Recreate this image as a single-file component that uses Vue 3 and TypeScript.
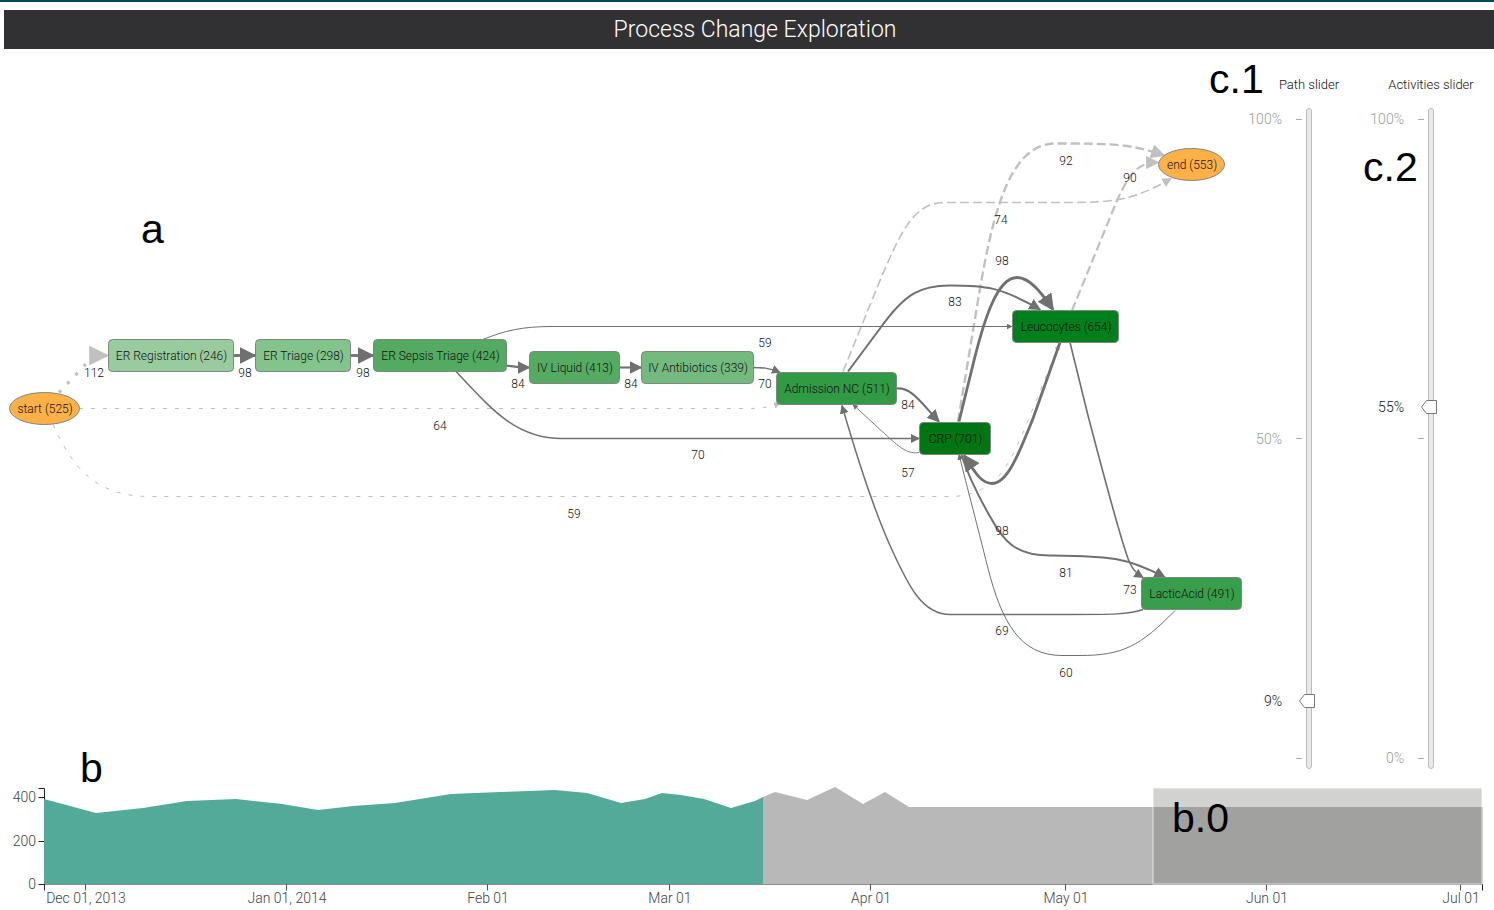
<script setup lang="ts">
import { computed, ref } from 'vue'

interface GraphNode {
  id: string
  label: string
  x: number
  y: number
  w: number
  fill: string
  kind: 'activity' | 'terminal'
}

interface GraphEdge {
  d: string
  weight: number
  width: number
  labelX: number
  labelY: number
  kind: 'flow' | 'terminal'
  dash?: string
}

interface Slider {
  id: string
  title: string
  value: number
  ticks: string[]
}

const nodes: GraphNode[] = [
  { id: 'start', label: 'start (525)', x: 9, y: 343, w: 70, fill: '#ffb046', kind: 'terminal' },
  { id: 'reg', label: 'ER Registration (246)', x: 108, y: 290, w: 125, fill: '#98cc9f', kind: 'activity' },
  { id: 'triage', label: 'ER Triage (298)', x: 255, y: 290, w: 95, fill: '#83c48d', kind: 'activity' },
  { id: 'sepsis', label: 'ER Sepsis Triage (424)', x: 373, y: 290, w: 133, fill: '#53aa60', kind: 'activity' },
  { id: 'liquid', label: 'IV Liquid (413)', x: 529, y: 302, w: 90, fill: '#55ab62', kind: 'activity' },
  { id: 'antibiotics', label: 'IV Antibiotics (339)', x: 641, y: 302, w: 112, fill: '#74ba7e', kind: 'activity' },
  { id: 'admission', label: 'Admission NC (511)', x: 776, y: 323, w: 120, fill: '#319a45', kind: 'activity' },
  { id: 'crp', label: 'CRP (701)', x: 919, y: 373, w: 71, fill: '#007514', kind: 'activity' },
  { id: 'leucocytes', label: 'Leucocytes (654)', x: 1012, y: 261, w: 106, fill: '#00801c', kind: 'activity' },
  { id: 'lactic', label: 'LacticAcid (491)', x: 1141, y: 528, w: 100, fill: '#389e4b', kind: 'activity' },
  { id: 'end', label: 'end (553)', x: 1158, y: 99, w: 66, fill: '#ffb046', kind: 'terminal' },
]

const edges: GraphEdge[] = [
  { d: 'M59 343 L80 321 C88 312 92 306 107 306', weight: 112, width: 3.3, labelX: 94, labelY: 324, kind: 'terminal', dash: '3 9' },
  { d: 'M79 359 H745 C760 359 768 358 780 354', weight: 64, width: 1.1, labelX: 440, labelY: 377, kind: 'terminal', dash: '4 8' },
  { d: 'M53 375 C70 411 90 447 150 447 H950 C1000 447 1012 406 1024 381 L1059 295', weight: 59, width: 1, labelX: 574, labelY: 465, kind: 'terminal', dash: '4 8' },
  { d: 'M843 322 L882 226 C900 186 912 153 945 153 H1070 C1115 153 1135 150 1171 129', weight: 74, width: 1.6, labelX: 1001, labelY: 171, kind: 'terminal', dash: '9 4' },
  { d: 'M958 372 L978 251 C990 181 1005 94 1055 94 C1110 94 1130 94 1164 106', weight: 92, width: 2.4, labelX: 1066, labelY: 112, kind: 'terminal', dash: '9 4' },
  { d: 'M1072 261 L1117 151 C1130 123 1138 113 1158 113', weight: 90, width: 2.2, labelX: 1130, labelY: 129, kind: 'terminal', dash: '9 4' },
  { d: 'M233 306 H255', weight: 98, width: 2.8, labelX: 245, labelY: 324, kind: 'flow' },
  { d: 'M350 306 H373', weight: 98, width: 2.8, labelX: 363, labelY: 324, kind: 'flow' },
  { d: 'M506 316 C513 317 518 318 529 318', weight: 84, width: 2.1, labelX: 518, labelY: 335, kind: 'flow' },
  { d: 'M619 318 H641', weight: 84, width: 2.1, labelX: 631, labelY: 335, kind: 'flow' },
  { d: 'M753 318 C762 318 768 318 780 323', weight: 70, width: 1.5, labelX: 765, labelY: 335, kind: 'flow' },
  { d: 'M483 290 C505 281 522 277 552 277 H1012', weight: 59, width: 1, labelX: 765, labelY: 294, kind: 'flow' },
  { d: 'M456 322 C490 358 515 389 562 389 H919', weight: 70, width: 1.5, labelX: 698, labelY: 406, kind: 'flow' },
  { d: 'M848 322 L880 279 C905 244 920 236 950 236 C985 236 1000 237 1040 260', weight: 83, width: 2, labelX: 955, labelY: 253, kind: 'flow' },
  { d: 'M959 372 L974 311 C984 271 997 228 1017 228 C1030 228 1042 244 1053 260', weight: 98, width: 2.8, labelX: 1002, labelY: 212, kind: 'flow' },
  { d: 'M896 339 C912 337 922 355 939 372', weight: 84, width: 2.1, labelX: 908, labelY: 356, kind: 'flow' },
  { d: 'M919 403 C905 406 893 391 880 380 L853 355', weight: 57, width: 0.9, labelX: 908, labelY: 424, kind: 'flow' },
  { d: 'M1060 293 L1033 369 C1020 401 1008 434 992 434 C980 434 973 419 964 406', weight: 98, width: 2.8, labelX: 1002, labelY: 482, kind: 'flow' },
  { d: 'M961 404 C968 426 978 446 990 467 C1003 491 1015 506 1050 506 C1110 507 1125 507 1165 528', weight: 81, width: 2, labelX: 1066, labelY: 524, kind: 'flow' },
  { d: 'M1143 560 C1130 565 1110 565 1070 565 H950 C922 565 908 536 890 496 C870 451 855 401 842 356', weight: 69, width: 1.5, labelX: 1002, labelY: 582, kind: 'flow' },
  { d: 'M1175 561 C1140 597 1122 606 1080 606 H1062 C1020 606 1002 573 988 519 C976 471 968 441 959 405', weight: 60, width: 1, labelX: 1066, labelY: 624, kind: 'flow' },
  { d: 'M1070 293 L1088 366 C1105 431 1118 481 1128 509 C1132 519 1135 523 1143 528', weight: 73, width: 1.6, labelX: 1130, labelY: 541, kind: 'flow' },
]

const sliders = ref<Slider[]>([
  { id: 'path', title: 'Path slider', value: 9, ticks: ['100%', '50%', ''] },
  { id: 'activities', title: 'Activities slider', value: 55, ticks: ['100%', '', '0%'] },
])

const past: [number, number][] = [
  [44, 19], [96, 33], [143, 28], [187, 21], [236, 19], [282, 24], [318, 30], [353, 26], [395, 23],
  [451, 14], [500, 12], [555, 10], [587, 13], [621, 23], [645, 19], [662, 13], [681, 15], [704, 19],
  [731, 28], [755, 21], [763, 17],
]
const recent: [number, number][] = [
  [763, 17], [775, 12], [807, 20], [835, 7], [863, 24], [885, 12], [909, 27], [1483, 27],
]
const baseline = 104

function area(points: [number, number][]): string {
  const top = points.map(([x, y]) => `${x},${y}`).join(' ')
  return `${points[0][0]},${baseline} ${top} ${points[points.length - 1][0]},${baseline}`
}

const pastArea = computed(() => area(past))
const recentArea = computed(() => area(recent))

const months = [
  { x: 85, label: 'Dec 01, 2013' },
  { x: 286, label: 'Jan 01, 2014' },
  { x: 487, label: 'Feb 01' },
  { x: 669, label: 'Mar 01' },
  { x: 870, label: 'Apr 01' },
  { x: 1065, label: 'May 01' },
  { x: 1266, label: 'Jun 01' },
  { x: 1460, label: 'Jul 01' },
]
const counts = [
  { y: 17, label: '400' },
  { y: 61, label: '200' },
  { y: 104, label: '0' },
]
</script>

<template>
  <div class="page">
    <header class="banner">
      <h1>Process Change Exploration</h1>
    </header>

    <main class="workspace">
      <section class="graph">
        <svg viewBox="0 0 1248 731" role="img" aria-label="Process graph">
          <defs>
            <marker id="tip-flow" viewBox="0 0 10 10" refX="9" refY="5" markerWidth="6" markerHeight="6" orient="auto">
              <path d="M0 0 L10 5 L0 10 Z" fill="#707070" />
            </marker>
            <marker id="tip-terminal" viewBox="0 0 10 10" refX="9" refY="5" markerWidth="6" markerHeight="6" orient="auto">
              <path d="M0 0 L10 5 L0 10 Z" fill="#c0c0c0" />
            </marker>
          </defs>
          <g transform="translate(0 0.5)">
            <path
              v-for="(edge, i) in edges"
              :key="i"
              class="edge"
              :class="edge.kind"
              :d="edge.d"
              :stroke-width="edge.width"
              :stroke-dasharray="edge.dash"
              :marker-end="`url(#tip-${edge.kind})`"
            />
          </g>
          <g transform="translate(0.5 0.5)">
            <g v-for="node in nodes" :key="node.id" class="node">
              <rect v-if="node.kind === 'activity'" :x="node.x" :y="node.y" :width="node.w" height="32" rx="4" :fill="node.fill" />
              <ellipse v-else :cx="node.x + node.w / 2" :cy="node.y + 16" :rx="node.w / 2" ry="16" :fill="node.fill" />
            </g>
          </g>
          <text v-for="node in nodes" :key="node.id" class="caption" :x="node.x + node.w / 2 + 1" :y="node.y + 21">{{ node.label }}</text>
          <text v-for="(edge, i) in edges" :key="i" class="caption" :x="edge.labelX" :y="edge.labelY + 4">{{ edge.weight }}</text>
        </svg>
        <span class="mark mark-a">a</span>
      </section>

      <aside class="sliders">
        <div v-for="s in sliders" :key="s.id" class="slider">
          <label :for="s.id">{{ s.title }}</label>
          <div class="rail">
            <div class="scale">
              <div v-for="(t, i) in s.ticks" :key="i" class="tick">{{ t }}<i></i></div>
            </div>
            <input :id="s.id" v-model.number="s.value" type="range" min="0" max="100" />
            <div class="reading" :style="{ bottom: `calc((100% - 22px) * ${s.value / 100})` }">
              <output :for="s.id">{{ s.value }}%</output>
              <svg class="handle" width="17" height="14" viewBox="0 0 17 14" aria-hidden="true">
                <path d="M0.5 7 L5.5 0.5 H15.5 V13.5 H5.5 Z" fill="#fff" stroke="#777" />
              </svg>
            </div>
          </div>
        </div>
        <span class="mark mark-c1">c.1</span>
        <span class="mark mark-c2">c.2</span>
      </aside>
    </main>

    <section class="timeline">
      <svg viewBox="0 0 1494 130" role="img" aria-label="Active cases over time">
        <g transform="translate(0.5 0.5)">
          <path class="axis" d="M38 8 H44 V104" />
          <path v-for="c in counts" :key="c.label" class="axis" :d="`M38 ${c.y} H44`" />
          <path class="axis" d="M44 104 V110 M1482 104 V110" />
          <path v-for="m in months" :key="m.label" class="axis soft" :d="`M${m.x} 104 V110`" />
        </g>
        <polygon :points="pastArea" fill="#54aa99" />
        <polygon :points="recentArea" fill="#b8b8b8" />
        <rect x="44" y="104" width="1439" height="1" fill="#000" fill-opacity="0.45" />
        <rect x="1153" y="8" width="329" height="96" class="window" />
        <g class="axis-text">
          <text v-for="c in counts" :key="c.label" x="36" :y="c.y + 5" text-anchor="end">{{ c.label }}</text>
          <text v-for="m in months" :key="m.label" :x="m.x + 1" y="123" text-anchor="middle">{{ m.label }}</text>
        </g>
      </svg>
      <span class="mark mark-b">b</span>
      <span class="mark mark-b0">b.0</span>
    </section>
  </div>
</template>

<style>
body {
  margin: 0;
  background: #fff;
}
</style>

<style scoped>
.page {
  font-family: Roboto, 'Liberation Sans', sans-serif;
  font-weight: 300;
  font-size: 13px;
  color: #111;
  border-top: 2px solid #00485a;
  overflow: hidden;
}

.banner {
  margin: 8px 0 0 4px;
  padding-left: 12px;
  background: #313133;
  color: #fff;
  text-align: center;
}

.banner h1 {
  margin: 0;
  font-size: 23px;
  font-weight: 300;
  line-height: 39px;
}

.workspace {
  display: flex;
}

.graph {
  position: relative;
  flex: 1;
  min-width: 0;
}

svg {
  display: block;
}

.graph > svg,
.timeline > svg {
  width: 100%;
  height: auto;
}

.edge {
  fill: none;
}

.flow {
  stroke: #707070;
}

.terminal {
  stroke: #c0c0c0;
}

.node rect,
.node ellipse {
  stroke: #808680;
}

.caption {
  text-anchor: middle;
  font-size: 12px;
  fill: #111;
}

.sliders {
  position: relative;
  display: flex;
  padding: 24px 2px 0 0;
}

.slider {
  width: 122px;
}

.slider label {
  display: block;
  text-align: center;
  white-space: nowrap;
  line-height: 24px;
}

.rail {
  position: relative;
  display: flex;
  gap: 4px;
  height: 661px;
  margin-top: 11px;
  font-size: 14px;
}

.scale {
  display: flex;
  flex-direction: column;
  justify-content: space-between;
  width: 54px;
}

.tick {
  display: flex;
  align-items: center;
  justify-content: flex-end;
  gap: 14px;
  height: 22px;
  color: #999;
}

.tick i {
  width: 6px;
  height: 1px;
  background: #aaa;
}

.rail input {
  appearance: none;
  writing-mode: vertical-lr;
  direction: rtl;
  box-sizing: border-box;
  width: 6px;
  height: 100%;
  margin: 0;
  border: 1px solid #bbb;
  border-radius: 3px;
  background: #e9e9e9;
}

.rail input::-webkit-slider-thumb {
  appearance: none;
  width: 6px;
  height: 22px;
  background: transparent;
}

.reading {
  position: absolute;
  left: 0;
  display: flex;
  align-items: center;
  gap: 17px;
  width: 68px;
  height: 22px;
  pointer-events: none;
}

.reading output {
  width: 34px;
  text-align: right;
}

.timeline {
  position: relative;
}

.axis {
  fill: none;
  stroke: #222;
}

.soft {
  stroke: #555;
}

.axis-text text {
  font-size: 14px;
  fill: #444;
}

.window {
  fill: #6e6e6a;
  fill-opacity: 0.31;
  stroke: #fff;
  stroke-opacity: 0.7;
}

.mark {
  position: absolute;
  font-family: 'Liberation Sans', Arial, sans-serif;
  font-weight: 400;
  font-size: 41px;
  line-height: 48px;
  color: #000;
}

.mark-a {
  left: 141px;
  top: 156px;
}

.mark-c1 {
  left: -39px;
  top: 6px;
}

.mark-c2 {
  left: 115px;
  top: 94px;
}

.mark-b {
  left: 80px;
  top: -36px;
}

.mark-b0 {
  left: 1172px;
  top: 14px;
}
</style>
